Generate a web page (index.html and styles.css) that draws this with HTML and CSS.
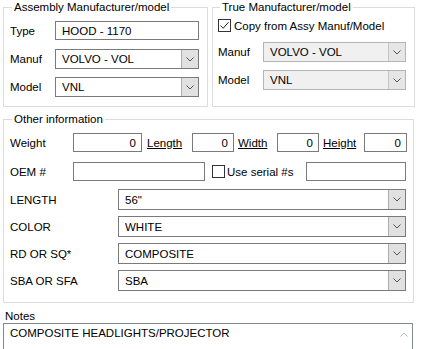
FILE: index.html
```html
<!DOCTYPE html>
<html lang="en">
<head>
    <meta charset="UTF-8">
    <title>Part details</title>
    <link rel="stylesheet" href="styles.css">
</head>
<body>
<div class="top">
    <fieldset class="group group-assy">
        <legend>Assembly Manufacturer/model</legend>
        <div class="row row-type">
            <span class="lbl">Type</span>
            <div class="box text-box">HOOD - 1170</div>
        </div>
        <div class="row row-manuf">
            <span class="lbl">Manuf</span>
            <div class="box combo"><span class="val">VOLVO - VOL</span><span class="btn"><svg width="8" height="5" viewBox="0 0 8 5"><path d="M0.5 0.5 L4 4 L7.5 0.5" fill="none" stroke="#555" stroke-width="1"/></svg></span></div>
        </div>
        <div class="row row-model">
            <span class="lbl">Model</span>
            <div class="box combo"><span class="val">VNL</span><span class="btn"><svg width="8" height="5" viewBox="0 0 8 5"><path d="M0.5 0.5 L4 4 L7.5 0.5" fill="none" stroke="#555" stroke-width="1"/></svg></span></div>
        </div>
    </fieldset>

    <fieldset class="group group-true">
        <legend>True Manufacturer/model</legend>
        <div class="row row-check">
            <span class="check checked"><svg width="11" height="11" viewBox="0 0 11 11"><path d="M1.5 5.5 L4.2 8.3 L9.5 2.2" fill="none" stroke="#222" stroke-width="1"/></svg></span>
            <span class="check-text">Copy from Assy Manuf/Model</span>
        </div>
        <div class="row row-manuf">
            <span class="lbl">Manuf</span>
            <div class="box combo disabled"><span class="val">VOLVO - VOL</span><span class="btn"><svg width="8" height="5" viewBox="0 0 8 5"><path d="M0.5 0.5 L4 4 L7.5 0.5" fill="none" stroke="#555" stroke-width="1"/></svg></span></div>
        </div>
        <div class="row row-model">
            <span class="lbl">Model</span>
            <div class="box combo disabled"><span class="val">VNL</span><span class="btn"><svg width="8" height="5" viewBox="0 0 8 5"><path d="M0.5 0.5 L4 4 L7.5 0.5" fill="none" stroke="#555" stroke-width="1"/></svg></span></div>
        </div>
    </fieldset>
</div>

<fieldset class="group group-other">
    <legend>Other information</legend>
    <div class="row row-dims">
        <span class="lbl lbl-other">Weight</span>
        <div class="box num w-weight">0</div>
        <a class="dim-link l-length">Length</a>
        <div class="box num w-length">0</div>
        <a class="dim-link l-width">Width</a>
        <div class="box num w-width">0</div>
        <a class="dim-link l-height">Height</a>
        <div class="box num w-height">0</div>
    </div>
    <div class="row row-oem">
        <span class="lbl lbl-other">OEM #</span>
        <div class="box w-oem"></div>
        <span class="check serial-check"></span>
        <span class="check-text">Use serial #s</span>
        <div class="box w-serial"></div>
    </div>
    <div class="attrs">
        <div class="row attr">
            <span class="lbl lbl-attr">LENGTH</span>
            <div class="box combo"><span class="val">56"</span><span class="btn"><svg width="8" height="5" viewBox="0 0 8 5"><path d="M0.5 0.5 L4 4 L7.5 0.5" fill="none" stroke="#555" stroke-width="1"/></svg></span></div>
        </div>
        <div class="row attr">
            <span class="lbl lbl-attr">COLOR</span>
            <div class="box combo"><span class="val">WHITE</span><span class="btn"><svg width="8" height="5" viewBox="0 0 8 5"><path d="M0.5 0.5 L4 4 L7.5 0.5" fill="none" stroke="#555" stroke-width="1"/></svg></span></div>
        </div>
        <div class="row attr">
            <span class="lbl lbl-attr">RD OR SQ*</span>
            <div class="box combo"><span class="val">COMPOSITE</span><span class="btn"><svg width="8" height="5" viewBox="0 0 8 5"><path d="M0.5 0.5 L4 4 L7.5 0.5" fill="none" stroke="#555" stroke-width="1"/></svg></span></div>
        </div>
        <div class="row attr">
            <span class="lbl lbl-attr">SBA OR SFA</span>
            <div class="box combo"><span class="val">SBA</span><span class="btn"><svg width="8" height="5" viewBox="0 0 8 5"><path d="M0.5 0.5 L4 4 L7.5 0.5" fill="none" stroke="#555" stroke-width="1"/></svg></span></div>
        </div>
    </div>
</fieldset>

<div class="notes">
    <div class="notes-label">Notes</div>
    <div class="notes-box">
        <span class="notes-text">COMPOSITE HEADLIGHTS/PROJECTOR</span>
        <span class="scroll"><svg width="8" height="5" viewBox="0 0 8 5"><path d="M0.5 4.5 L4 1 L7.5 4.5" fill="none" stroke="#bbb" stroke-width="1"/></svg></span>
    </div>
</div>
</body>
</html>
```

FILE: styles.css
```css
body {
    margin: 0;
    background: #fff;
    color: #000;
    font-family: "Liberation Sans", Arial, sans-serif;
    font-size: 11.5px;
    width: 422px;
    height: 349px;
    overflow: hidden;
}

.top {
    display: flex;
    padding-left: 3px;
    gap: 4px;
}

.group {
    margin: 0;
    border: 1px solid #dcdcdc;
    padding: 0;
    min-width: 0;
    box-sizing: border-box;
}

.group legend {
    padding: 0 2px;
    margin-left: 2px;
    line-height: 14px;
}

.group-assy {
    width: 205px;
    height: 107px;
    padding: 0 8px 0 6px;
}

.group-true {
    width: 203px;
    height: 107px;
    padding: 0 8px 0 5px;
}

.row {
    display: flex;
    align-items: center;
}

.lbl {
    width: 45px;
    flex: none;
}

.box {
    border: 1px solid #7a7a7a;
    background: #fff;
    box-sizing: border-box;
    height: 19px;
    padding: 0 6px;
    display: flex;
    align-items: center;
    flex: 1;
}

.row-type {
    margin-top: 7px;
}

.row-manuf {
    margin-top: 9px;
}

.row-model {
    margin-top: 8px;
}

.combo {
    height: 20px;
    padding: 0;
}

.combo .val {
    flex: 1;
    padding-left: 6px;
}

.combo .btn {
    width: 16px;
    height: 100%;
    background: #e1e1e1;
    border-left: 1px solid #adadad;
    display: flex;
    align-items: center;
    justify-content: center;
}

.combo.disabled {
    background: #f0f0f0;
    border-color: #b4b4b4;
}

.combo.disabled .btn {
    background: #e6e6e6;
    border-left-color: #c4c4c4;
}

.check {
    width: 13px;
    height: 13px;
    border: 1px solid #333;
    box-sizing: border-box;
    background: #fff;
    display: inline-flex;
    align-items: center;
    justify-content: center;
    flex: none;
}

.row-check {
    margin-top: 5px;
    height: 13px;
}

.row-check .check-text {
    margin-left: 3px;
}

.row-check + .row-manuf {
    margin-top: 10px;
}

/* Other information */
.group-other {
    margin: 5px 0 0 3px;
    width: 411px;
    height: 191px;
    padding: 0 7px 0 6px;
}

.lbl-other {
    width: 63px;
}

.row-dims {
    margin-top: 7px;
}

.num {
    height: 19px;
    justify-content: flex-end;
    padding: 0 5px;
    flex: none;
}

.w-weight {
    width: 69px;
}

.w-length,
.w-width {
    width: 42px;
}

.w-height {
    width: 43px;
}

.dim-link {
    text-decoration: underline;
    color: #000;
    flex: none;
}

.l-length {
    margin-left: 5px;
    width: 45px;
}

.l-width {
    margin-left: 4px;
    width: 39px;
}

.l-height {
    margin-left: 4px;
    width: 41px;
}

.row-oem {
    margin-top: 10px;
}

.w-oem {
    flex: none;
    width: 132px;
    height: 19px;
}

.serial-check {
    margin-left: 7px;
}

.row-oem .check-text {
    margin-left: 2px;
    width: 79px;
}

.w-serial {
    flex: none;
    width: 100px;
    height: 19px;
}

.attrs {
    margin-top: 8px;
    display: flex;
    flex-direction: column;
    gap: 6px;
}

.lbl-attr {
    width: 108px;
}

.attr .combo {
    height: 21px;
    flex: none;
    width: 288px;
}

/* Notes */
.notes {
    padding: 6px 9px 0 3px;
}

.notes-label {
    padding-left: 2px;
    line-height: 14px;
}

.notes-box {
    border: 1px solid #828790;
    height: 40px;
    display: flex;
    align-items: flex-start;
}

.notes-text {
    flex: 1;
    padding: 3px 0 0 6px;
}

.scroll {
    width: 17px;
    padding-top: 8px;
    display: flex;
    justify-content: center;
}
```
